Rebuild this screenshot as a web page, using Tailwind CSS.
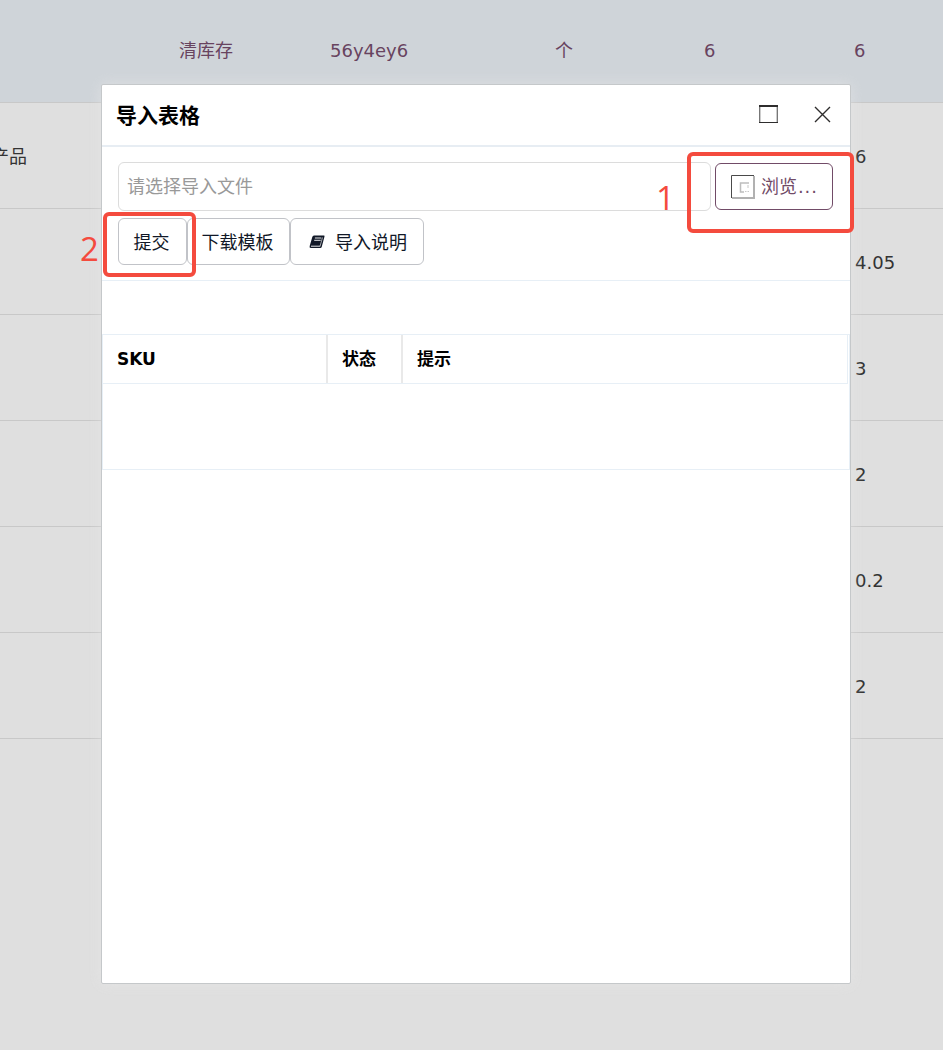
<!DOCTYPE html>
<html lang="zh-CN">
<head>
<meta charset="utf-8">
<title>导入表格</title>
<script src="https://cdn.jsdelivr.net/npm/@tailwindcss/browser@4"></script>
</head>
<body class="relative h-[1050px] w-[943px] overflow-hidden bg-[#dfdfdf] font-['DejaVu_Sans','Noto_Sans_CJK_SC',sans-serif] text-[18px] leading-[27px] text-[#333]">
<!-- Product list behind the dialog -->
<main class="w-[943px]">
  <div class="grid h-[103px] grid-cols-[164px_151px_225px_150px_150px_103px] items-center border-b border-[#c8c8c8] bg-[#cfd4d9] pb-[2px] text-[#68435f]">
    <span></span><span class="pl-[15px]">清库存</span><span class="pl-[15px]">56y4ey6</span><span class="pl-[15px]">个</span><span class="pl-[14px]">6</span><span class="pl-[14px]">6</span>
  </div>
  <div class="flex h-[106px] items-center justify-between border-b border-[#c8c8c8] pt-[2px]"><span class="-ml-[9px]">产品</span><span class="w-[88px]">6</span></div>
  <div class="flex h-[106px] items-center justify-end border-b border-[#c8c8c8] pt-[2px]"><span class="w-[88px]">4.05</span></div>
  <div class="flex h-[106px] items-center justify-end border-b border-[#c8c8c8] pt-[2px]"><span class="w-[88px]">3</span></div>
  <div class="flex h-[106px] items-center justify-end border-b border-[#c8c8c8] pt-[2px]"><span class="w-[88px]">2</span></div>
  <div class="flex h-[106px] items-center justify-end border-b border-[#c8c8c8] pt-[2px]"><span class="w-[88px]">0.2</span></div>
  <div class="flex h-[106px] items-center justify-end border-b border-[#c8c8c8] pt-[2px]"><span class="w-[88px]">2</span></div>
</main>

<!-- Import dialog -->
<section class="absolute left-[101px] top-[84px] h-[900px] w-[750px] rounded-[2px] border border-[#c5c8ca] bg-white text-[#111827] shadow-[0_0_14px_rgba(235,235,235,0.55)]">
  <header class="flex h-[62px] items-center justify-between border-b-2 border-[#e7edf3] pl-[14px] pr-[19px]">
    <h1 class="pt-[2px] text-[21px] font-bold text-black">导入表格</h1>
    <div class="flex items-center gap-[36px]">
      <svg class="-mt-0.5 h-[18px] w-[19px]" viewBox="0 0 19 18" fill="none" stroke="#2e2d2d"><path d="M0 1h19" stroke-width="2"/><path d="M0 17.5h19"/><path d="M.5 2v15M18.5 2v15" stroke="#777"/><path d="M1.5 2v15M17.5 2v15" stroke="#ccc"/></svg>
      <svg class="-mt-0.5 h-[17px] w-[17px]" viewBox="0 0 17 17" fill="none" stroke="#2e2d2d" stroke-width="1.4"><path d="M1 1l15 15M16 1L1 16"/></svg>
    </div>
  </header>
  <div class="h-[134px] border-b border-[#e7eff6] px-[16px] pt-[15px]">
    <div class="flex items-start gap-[4px]">
      <input type="text" placeholder="请选择导入文件" class="h-[49px] w-[593px] rounded-[6px] border border-[#dcdcdc] bg-white pl-[8px] pr-[9px] placeholder:text-[#999]">
      <button class="mt-px flex h-[47px] w-[118px] items-center rounded-[6px] border border-[#714b67] pl-[15px] text-[#714b67]">
        <svg class="h-[24px] w-[24px] shrink-0" viewBox="0 0 24 24" fill="none"><path d="M.5 23V.5H23" stroke="#4a4a4a"/><path d="M1 23h22V1" stroke="#b1b1b1" stroke-width="2"/><path d="M18 8H9.5V17H13" stroke="#bdbdbd" stroke-width="1.5"/><path d="M14 16.5h1.5M16.5 16.5h1.5M17 10v3" stroke="#c8c8c8"/></svg>
        <span class="ml-[6px]">浏览<span class="ml-px tracking-[.9px]">...</span></span>
      </button>
    </div>
    <div class="mt-[7px] flex">
      <button class="h-[47px] w-[69px] rounded-[6px] border border-[#c1c3c8] pr-[2px] pt-[2px]">提交</button>
      <button class="h-[47px] w-[103px] rounded-[6px] border border-[#c1c3c8] pr-[2px] pt-[2px]">下载模板</button>
      <button class="flex h-[47px] w-[134px] items-center rounded-[6px] border border-[#c1c3c8] pl-[18px]">
        <svg class="h-[14px] w-[16px]" viewBox="0 0 16 14"><path d="M5 .5h10q.7.200.5 1L12.700 12q-.3 1-1.500 1H1.800Q0 13 .7 11L3.300 2Q3.700.5 5 .5z" fill="#111827"/><path d="M5.900 3h6.500M5.200 5.300h6.500M2 11.200h9.300" stroke="white" stroke-width=".9" fill="none"/><path d="M13.500 2.500L11.100 11" stroke="white" stroke-width=".6"/></svg>
        <span class="ml-[10px] pt-[2px]">导入说明</span>
      </button>
    </div>
  </div>
  <div class="mt-[53px] h-[136px] w-[748px] border border-[#e7eff6]">
    <div class="flex h-[49px] w-[745px] items-center border-b border-r border-[#e7eff6] text-[17px] font-bold text-black">
      <div class="flex h-full w-[225px] items-center border-r-2 border-[#e9e9e9] pl-[14px]">SKU</div>
      <div class="flex h-full w-[75px] items-center border-r-2 border-[#e9e9e9] pl-[14px]">状态</div>
      <div class="flex h-full flex-1 items-center pl-[14px]">提示</div>
    </div>
  </div>
</section>

<!-- Step markers -->
<div class="absolute left-[687px] top-[152px] h-[81px] w-[167px] rounded-[6px] border-4 border-[#f44b3e]"></div>
<div class="absolute left-[103px] top-[212px] h-[65px] w-[93px] rounded-[6px] border-4 border-[#f44b3e]"></div>
<div class="absolute left-[656px] top-[180px] font-['Open_Sans',sans-serif] text-[33px] leading-[36px] text-[#f44b3e]">1</div>
<div class="absolute left-[80px] top-[231px] font-['Open_Sans',sans-serif] text-[33px] leading-[36px] text-[#f44b3e]">2</div>
</body>
</html>
